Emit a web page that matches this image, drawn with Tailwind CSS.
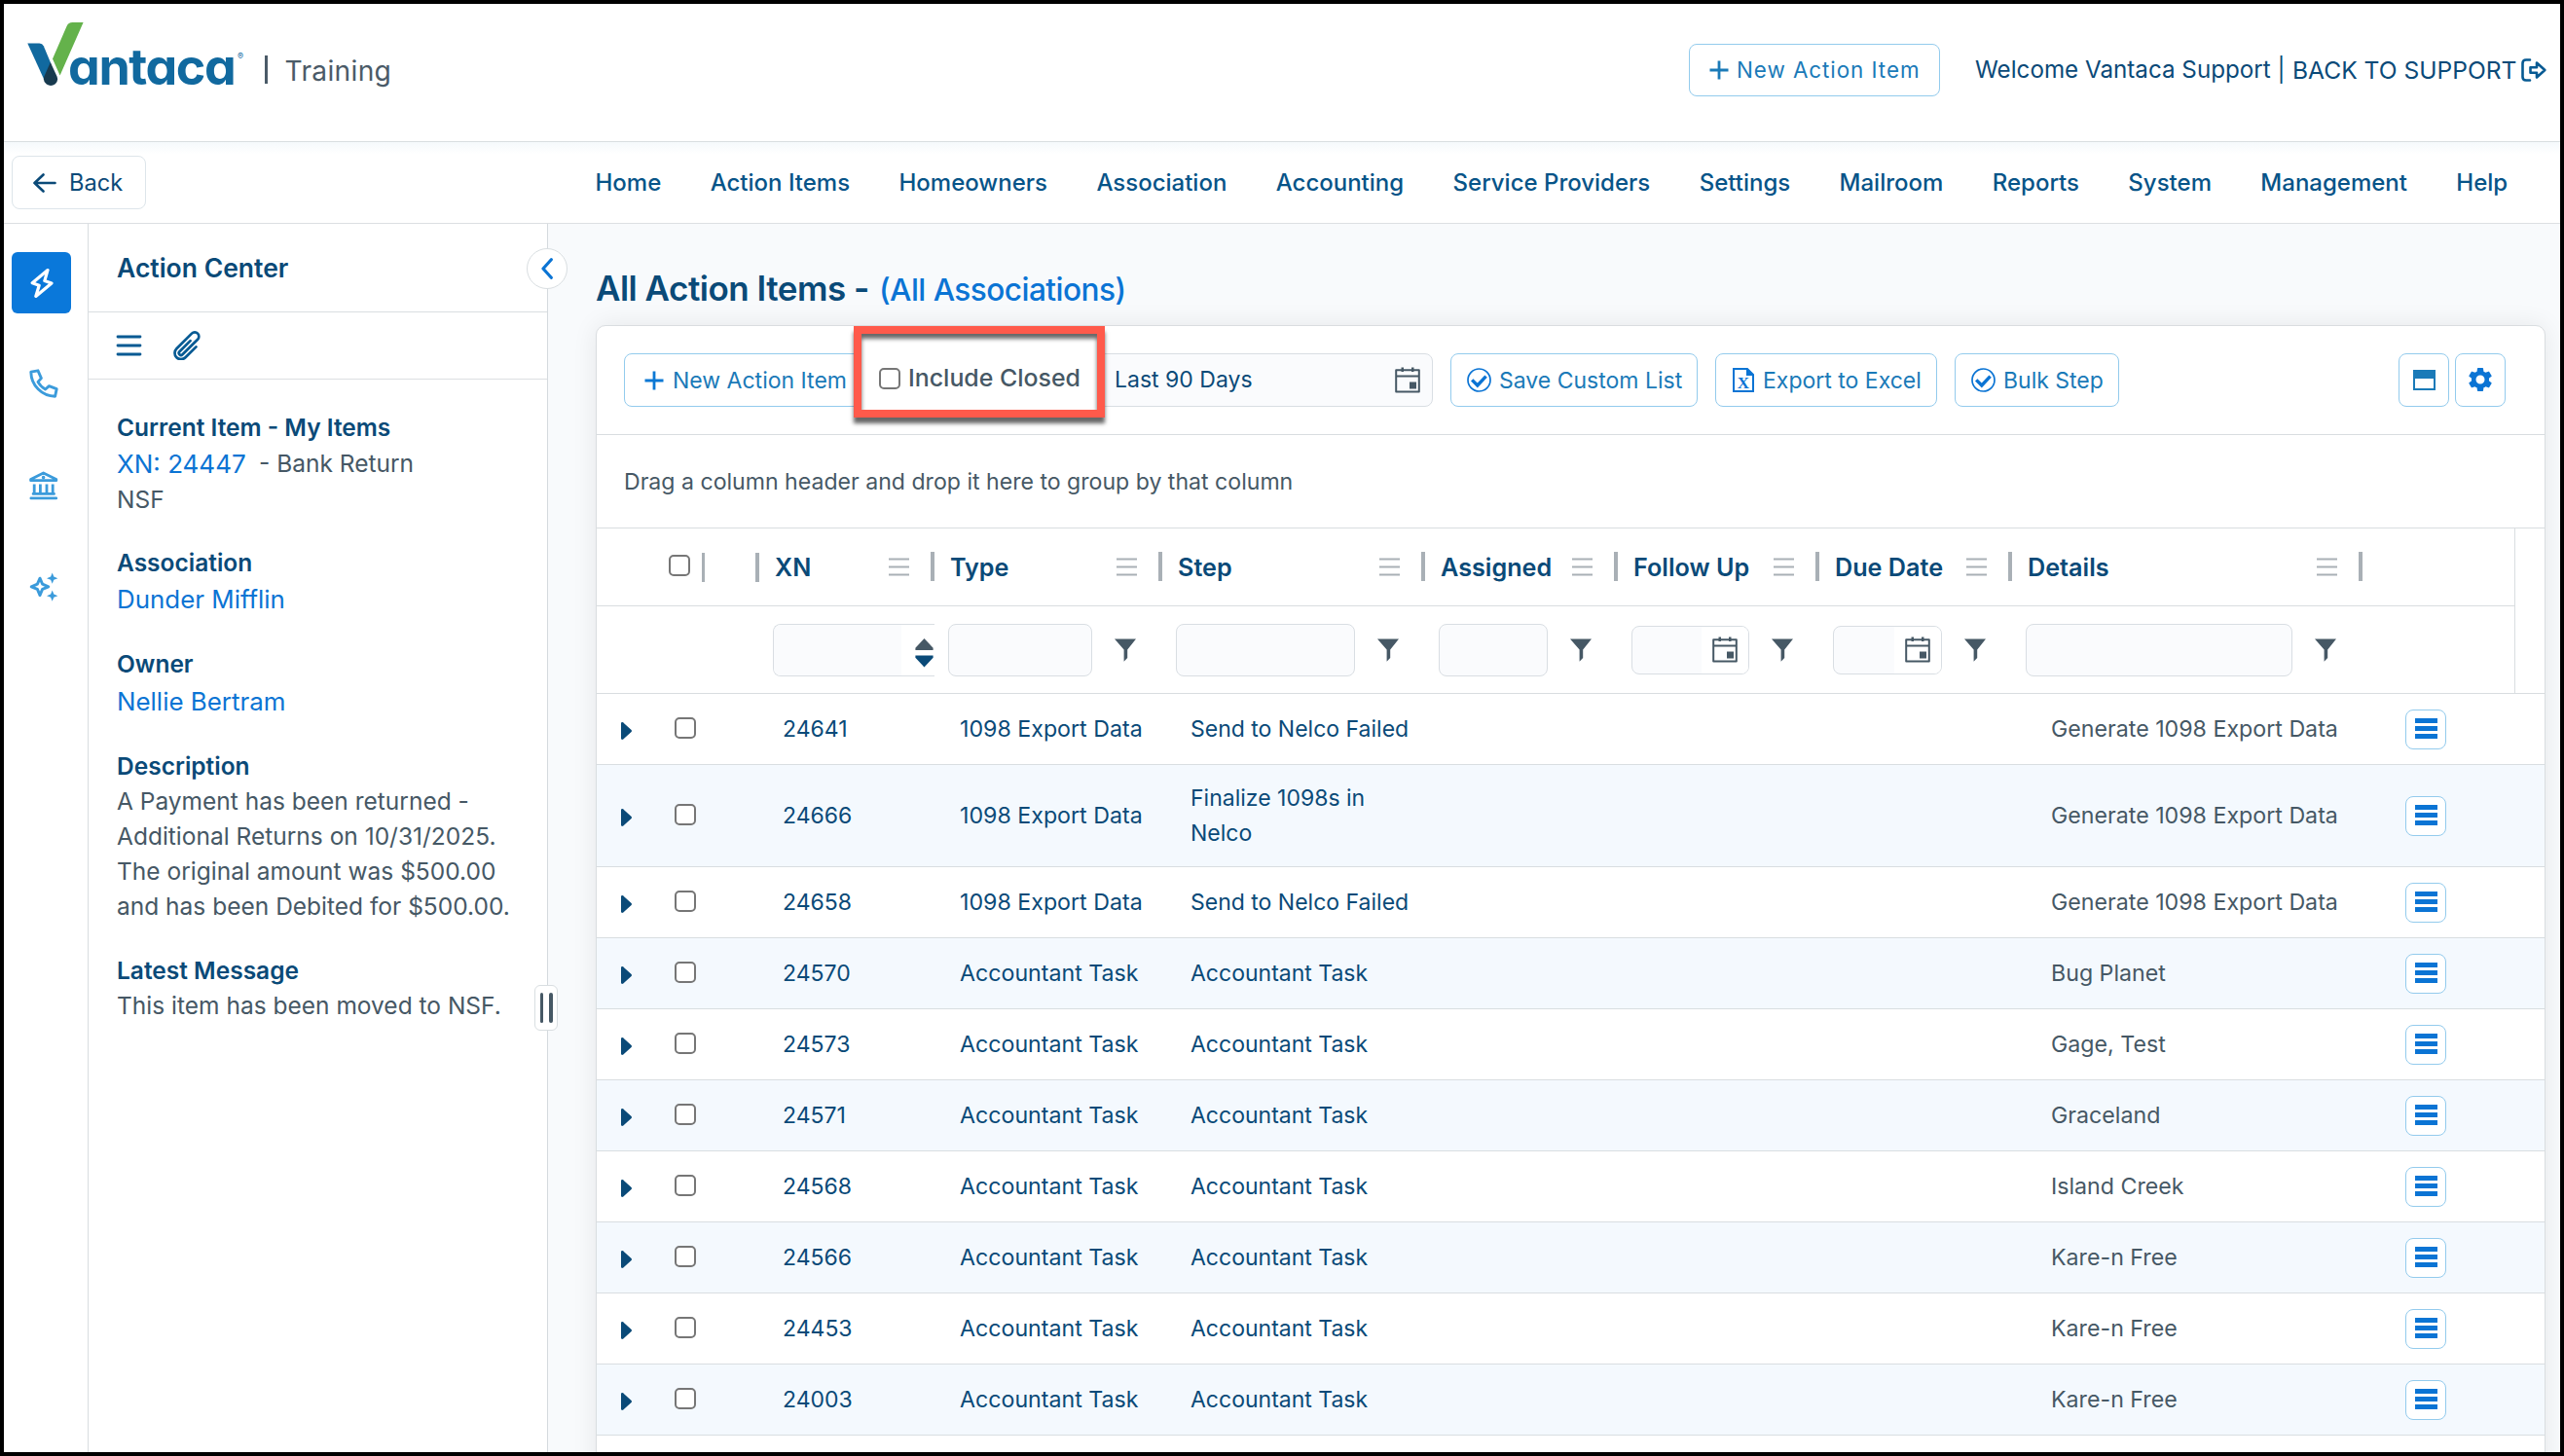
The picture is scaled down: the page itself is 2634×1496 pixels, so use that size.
<!DOCTYPE html>
<html lang="en">
<head>
  <meta charset="UTF-8">
  <meta name="viewport" content="width=device-width, initial-scale=1.0">
  <title>Vantaca - All Action Items</title>
  <script src="https://cdn.jsdelivr.net/npm/@tailwindcss/browser@4"></script>
</head>
<body class="h-screen overflow-hidden border-4 border-black bg-white font-['Inter',sans-serif] text-[23px] text-[#465865] flex flex-col">

  <!-- icon sprite -->
  <svg class="hidden" xmlns="http://www.w3.org/2000/svg">
    <symbol id="i-plus" viewBox="0 0 20 20"><path d="M10 0.5V19.5M0.5 10H19.5" stroke="currentColor" stroke-width="2.8" fill="none"/></symbol>
    <symbol id="i-lines" viewBox="0 0 21 21"><path d="M0 2.5H21M0 10.5H21M0 18.5H21" stroke="currentColor" stroke-width="2.2" fill="none"/></symbol>
    <symbol id="i-funnel" viewBox="0 0 22 24"><path d="M0 0.5H22L13.2 11.5V20L9.6 23.8V11.5Z" fill="currentColor"/></symbol>
    <symbol id="i-cal" viewBox="0 0 26 27"><path d="M1.2 3.2H24.8V25.6H1.2ZM1.2 9.5H24.8" stroke="currentColor" stroke-width="2" fill="none" stroke-linejoin="round"/><path d="M6.5 0.5H9V5H6.5ZM17 0.5H19.5V5H17ZM15 15.5H22V22.5H15Z" fill="currentColor"/></symbol>
    <symbol id="i-check" viewBox="0 0 25 25"><circle cx="12.5" cy="12.5" r="11.5" fill="none" stroke="currentColor" stroke-width="1.7"/><path d="M5.2 12.4L10.8 18L19.6 8.6" fill="none" stroke="currentColor" stroke-width="3.4"/></symbol>
    <symbol id="i-caret" viewBox="0 0 11 18"><path d="M1.2 0C2 0 2.6 0.5 3.1 1.2L10.6 8C11.1 8.6 11.1 9.4 10.6 10L3.1 16.8C2.6 17.5 2 18 1.2 18C0.4 18 0 17.4 0 16.6V1.4C0 0.6 0.4 0 1.2 0Z" fill="currentColor"/></symbol>
    <symbol id="i-bars" viewBox="0 0 23 21"><path d="M0 2.5H23M0 10.5H23M0 18.5H23" stroke="currentColor" stroke-width="5" fill="none"/></symbol>
  </svg>

  <header class="h-[142px] shrink-0 border-b border-[#d9dee0] flex items-start justify-between pl-6 pr-[14px]">
    <div class="flex items-start">
      <svg class="mt-[19px] w-[60px] h-[66px] shrink-0" viewBox="0 0 60 66">
        <path d="M0.3 21.5H12.5Q15.5 21.5 16.8 24.3L23.8 41L27 52L17.3 58.8Z" fill="#11699f"/>
        <path d="M57.6 0L33.6 54.5L26 37.5L40.4 4.2Q42.2 0 46.5 0Z" fill="#64b24b"/>
        <path d="M23.8 41L30.4 55.2Q32.4 60 28.8 63.2Q24.5 66.6 19.8 63.6Q15.6 60.2 17.4 55.6Z" fill="#183a4f"/>
      </svg>
      <div class="mt-[38px] -ml-[18px] w-[172px] h-[54px] leading-[54px] text-[52px] font-bold tracking-[-1.4px] text-[#11699f]" style="font-feature-settings:'cv11'">antaca</div>
      <div class="mt-[47px] ml-[2px] w-7 text-[9px] text-[#11699f]">®</div>
      <div class="mt-[53px] w-[2.5px] h-[29px] bg-[#4b5b68]"></div>
      <div class="mt-[42px] ml-[18px] h-[54px] leading-[54px] text-[28.2px] tracking-[0.3px] text-[#4b5b68]">Training</div>
    </div>
    <div class="mt-[41px] h-[54px] flex items-center text-[24.2px] text-[#0b4a78] whitespace-nowrap">
      <button class="w-[258px] h-[54px] mr-[36px] border-[1.5px] border-[#93cbed] rounded-lg flex items-center pl-5 text-[#1a7ab8] text-[22.4px] tracking-[0.95px]">
        <svg class="w-5 h-5 mr-2"><use href="#i-plus"/></svg>New Action Item
      </button>
      <span class="w-[326px] pt-px">Welcome Vantaca Support |</span>
      <a class="w-[235px] text-[24.6px]">BACK TO SUPPORT</a>
      <svg class="w-[26px] h-6 text-[#075a93]" viewBox="0 0 26 24" fill="none" stroke="currentColor" stroke-width="2.6" stroke-linejoin="round" stroke-linecap="round">
        <path d="M9 1.5H5Q1.5 1.5 1.5 5V19Q1.5 22.5 5 22.5H9"/>
        <path d="M9.5 9.2H16V4.5L24.3 12L16 19.5V14.8H9.5Z"/>
      </svg>
    </div>
  </header>

  <nav class="h-[84px] shrink-0 border-b border-[#dcdfe2] bg-linear-to-b from-[#f5f9fc] to-white to-15% flex items-center text-[24px] font-medium text-[#075488] whitespace-nowrap">
    <button class="w-[138px] h-[55px] ml-2 border border-[#dde5ea] rounded-lg bg-white flex items-center pl-[21px] text-[23.6px] font-normal text-[#0b4a78]">
      <svg class="w-6 h-5 mr-[13px]" viewBox="0 0 24 20" fill="none" stroke="currentColor" stroke-width="2.6" stroke-linecap="round" stroke-linejoin="round"><path d="M22.5 10H1.5M10.5 1.5L1.5 10L10.5 18.5"/></svg>Back
    </button>
    <div class="ml-[461.5px] flex gap-[50.4px]">
      <a>Home</a><a>Action Items</a><a>Homeowners</a><a>Association</a><a>Accounting</a><a>Service Providers</a><a>Settings</a><a>Mailroom</a><a>Reports</a><a>System</a><a>Management</a><a>Help</a>
    </div>
  </nav>

  <div class="flex-1 min-h-0 flex">
    <!-- icon rail -->
    <aside class="w-[87px] shrink-0 border-r border-[#d9dde0] text-[#3b9bdb] flex flex-col">
      <div class="ml-2 mt-[29px] w-[61px] h-[63px] rounded-md bg-[#0a78da] flex items-center justify-center">
        <svg class="w-6 h-8" viewBox="0 0 24 32" fill="none" stroke="white" stroke-width="3.2" stroke-linejoin="round"><path d="M18 2.6L2.2 15.8L9.2 18.2L5.8 29.4L22 16L14.8 13.6Z"/></svg>
      </div>
      <svg class="ml-[26px] mt-[57px] w-[30px] h-[30px]" viewBox="0 0 30 30" fill="none" stroke="currentColor" stroke-width="2.9" stroke-linejoin="round"><path d="M1.8 3.2L9 1.8L12.4 9.6L9 13.4C10.8 16.8 13.2 19 16.6 21L20.4 17.6L28.2 20.6L26.6 28.2C13 28 2 17 1.8 3.2Z"/></svg>
      <svg class="ml-[26px] mt-[75px] w-[30px] h-[30px]" viewBox="0 0 30 30" fill="none" stroke="currentColor" stroke-width="2.8" stroke-linejoin="round" stroke-linecap="round"><path d="M1.6 9.7V8.4L14.6 2L27.8 8.4V9.7Z"/><path d="M1.8 27.9H27.8M4 23.4H25.6" stroke-width="2.6"/><path d="M5.2 13.5V22M11.4 13.5V22M18 13.5V22M24.2 13.5V22" stroke-linecap="butt"/><circle cx="14.6" cy="6.6" r="1" stroke-width="1.6"/></svg>
      <svg class="ml-[26px] mt-[74px] w-[30px] h-[30px]" viewBox="0 0 30 30" fill="currentColor"><path d="M11 6.2L13.6 12.2L19.8 14.8L13.6 17.4L11 23.6L8.4 17.4L2.2 14.8L8.4 12.2Z" fill="none" stroke="currentColor" stroke-width="2.9" stroke-linejoin="round"/><path d="M23.7 0.6L25.3 4.6L29.4 6.2L25.3 7.8L23.7 11.8L22.1 7.8L18 6.2L22.1 4.6ZM23.7 18.6L25.3 22.6L29.4 24.2L25.3 25.8L23.7 29.8L22.1 25.8L18 24.2L22.1 22.6Z"/></svg>
    </aside>

    <!-- action center -->
    <section class="relative w-[472px] shrink-0 border-r border-[#d5dade] text-[24.5px]">
      <div class="h-[91px] border-b border-[#d9dee1] flex items-center pl-[29px] pt-[2px] text-[26.5px] font-semibold text-[#0a4a78]">Action Center</div>
      <div class="h-[69px] border-b border-[#dcdfe2] flex items-center pl-7 gap-8 text-[#075a93]">
        <svg class="w-[27px] h-[22px]" viewBox="0 0 27 22" fill="none" stroke="currentColor" stroke-width="2.8" stroke-linecap="round"><path d="M2 2H25M2 11H25M2 20H25"/></svg>
        <svg class="w-[28px] h-[30px]" viewBox="2 1.3 19.5 21" fill="none" stroke="currentColor" stroke-width="1.9" stroke-linecap="round" stroke-linejoin="round"><path d="m18.375 12.739-7.693 7.693a4.5 4.5 0 0 1-6.364-6.364l10.94-10.94A3 3 0 1 1 19.5 7.372L8.552 18.32m.009-.01-.01.01m5.699-9.941-7.81 7.81a1.5 1.5 0 0 0 2.112 2.13"/></svg>
      </div>
      <div class="px-[29px] pt-[30.5px] flex flex-col gap-[29px]">
        <div class="leading-[37.3px]">
          <h3 class="font-semibold text-[#0a4a78]">Current Item - My Items</h3>
          <div class="flex h-[37px]"><a class="w-[146px] text-[26px] text-[#0b74d4]">XN: 24447</a><span>- Bank Return</span></div>
          <p>NSF</p>
        </div>
        <div class="leading-[37.3px] -mt-[1px]">
          <h3 class="font-semibold text-[#0a4a78]">Association</h3>
          <a class="block h-[37px] text-[25.9px] text-[#0b74d4]">Dunder Mifflin</a>
        </div>
        <div class="leading-[37.3px] mt-px">
          <h3 class="font-semibold text-[#0a4a78]">Owner</h3>
          <a class="block h-[37px] text-[25.9px] text-[#0b74d4]">Nellie Bertram</a>
        </div>
        <div class="leading-[36.1px] mt-px">
          <h3 class="font-semibold text-[#0a4a78]">Description</h3>
          <p class="whitespace-nowrap">A Payment has been returned -<br>Additional Returns on 10/31/2025.<br>The original amount was $500.00<br>and has been Debited for $500.00.</p>
        </div>
        <div class="leading-[36.3px] mt-px">
          <h3 class="font-semibold text-[#0a4a78]">Latest Message</h3>
          <p class="whitespace-nowrap">This item has been moved to NSF.</p>
        </div>
      </div>
      <!-- collapse button + resize handle sit on the panel edge -->
      <button class="absolute z-10 left-[450px] top-[25px] w-[42px] h-[42px] rounded-full border border-[#d9dee1] bg-white flex items-center justify-center">
        <svg class="w-3 h-[22px] text-[#0b74d4]" viewBox="0 0 12 22" fill="none" stroke="currentColor" stroke-width="3.2" stroke-linecap="round" stroke-linejoin="round"><path d="M10.3 1.8L2 11L10.3 20.2"/></svg>
      </button>
      <div class="absolute z-10 left-[458px] top-[782px] w-6 h-[47px] rounded-md border border-[#d9dee1] bg-white flex items-center justify-center gap-[6px]">
        <span class="w-[3.5px] h-[31px] rounded bg-[#465865]"></span><span class="w-[3.5px] h-[31px] rounded bg-[#465865]"></span>
      </div>
    </section>

    <main class="flex-1 min-w-0 bg-[#f8fafc] pl-[49px] overflow-hidden">
      <h1 class="h-[104px] pt-[45px] leading-[43px] text-[35px] tracking-[-0.5px] font-semibold text-[#0a4a78] flex whitespace-nowrap">
        <span class="w-[291px]">All Action Items -</span><span class="text-[31.6px] tracking-[-0.55px] font-medium leading-[46px] text-[#0b74d4]">(All Associations)</span>
      </h1>
      <div class="w-[2003px] h-[1200px] bg-white border border-[#d9dde0] rounded-t-[10px] shadow-[0_0_26px_rgba(0,0,0,0.08)]">

        <div class="relative h-[112px] border-b border-[#d9dde0] flex items-start pt-7 pl-7 text-[#1a7ab8] whitespace-nowrap">
          <button class="w-[260px] h-[55px] border border-[#93cbed] rounded-lg flex items-center pl-5"><svg class="w-5 h-5 mr-[9px] text-[#0b78d4]"><use href="#i-plus"/></svg><span class="pt-[2px]">New Action Item</span></button>
          <div class="ml-[214px] w-[357px] h-[55px] border border-[#d9dee3] rounded-lg bg-[#fafbfd] flex items-center justify-between pl-[29px] pr-3 text-[#0a4a78]">Last 90 Days<svg class="w-[26px] h-[27px] text-[#465865]"><use href="#i-cal"/></svg></div>
          <button class="ml-[18px] w-[254px] h-[55px] border border-[#93cbed] rounded-lg flex items-center pl-4"><svg class="w-[25px] h-[25px] mr-2 text-[#0b74d4]"><use href="#i-check"/></svg><span class="pt-[2px]">Save Custom List</span></button>
          <button class="ml-[18px] w-[228px] h-[55px] border border-[#93cbed] rounded-lg flex items-center pl-[17px]">
            <svg class="w-[22px] h-[25px] mr-[9px] text-[#0b74d4]" viewBox="0 0 22 25"><path d="M1 1H15L21 7V24H1Z" fill="none" stroke="currentColor" stroke-width="2"/><path d="M14 0L22 8H14Z" fill="currentColor"/><text x="11" y="21" text-anchor="middle" font-size="17" font-weight="700" font-family="Liberation Serif" fill="currentColor">X</text></svg><span class="pt-[2px]">Export to Excel</span>
          </button>
          <button class="ml-[18px] w-[169px] h-[55px] border border-[#93cbed] rounded-lg flex items-center pl-4"><svg class="w-[25px] h-[25px] mr-2 text-[#0b74d4]"><use href="#i-check"/></svg><span class="pt-[2px]">Bulk Step</span></button>
          <button class="ml-auto w-[52px] h-[55px] border border-[#93cbed] rounded-lg flex items-center justify-center"><svg class="w-[23px] h-[21px]" viewBox="0 0 23 21"><path d="M0 0H23V21H0ZM2 9V19H21V9Z" fill="currentColor" fill-rule="evenodd"/></svg></button>
          <button class="ml-[6px] mr-10 w-[52px] h-[55px] border border-[#93cbed] rounded-lg flex items-center justify-center text-[#0b74d4]">
            <svg class="w-[30px] h-[30px] mb-[2px]" viewBox="0 0 24 24"><path fill="currentColor" d="M19.14 12.94c.04-.3.06-.61.06-.94s-.02-.64-.07-.94l2.03-1.58a.49.49 0 0 0 .12-.61l-1.92-3.32a.49.49 0 0 0-.59-.22l-2.39.96a7 7 0 0 0-1.62-.94l-.36-2.54a.48.48 0 0 0-.48-.41h-3.84a.48.48 0 0 0-.47.41l-.36 2.54c-.59.24-1.13.57-1.62.94l-2.39-.96a.48.48 0 0 0-.59.22L2.74 8.87a.48.48 0 0 0 .12.61l2.03 1.58c-.05.3-.09.63-.09.94s.02.64.07.94l-2.03 1.58a.49.49 0 0 0-.12.61l1.92 3.32c.12.22.37.29.59.22l2.39-.96c.5.38 1.03.7 1.62.94l.36 2.54c.05.24.24.41.48.41h3.84c.24 0 .44-.17.47-.41l.36-2.54a6.8 6.8 0 0 0 1.62-.94l2.39.96c.22.08.47 0 .59-.22l1.92-3.32a.48.48 0 0 0-.12-.61zM12 15.6a3.6 3.6 0 1 1 0-7.2 3.6 3.6 0 0 1 0 7.2"/></svg>
          </button>
          <!-- callout -->
          <div class="absolute left-[264px] top-0 w-[258px] h-[94px] border-8 border-[#ff5a4b] bg-white shadow-[0_6px_4px_rgba(0,0,0,0.6),inset_0_5px_4px_rgba(0,0,0,0.6)] flex items-center pl-[18px] pt-[13px] text-[24.9px] font-medium text-[#465865]">
            <input type="checkbox" class="appearance-none w-[22px] h-[22px] border-2 border-[#767676] rounded-[5px] bg-white mr-[8px]">Include Closed
          </div>
        </div>

        <div class="h-24 border-b border-[#d9dde0] flex items-center pl-7 pt-[2px] text-[23.1px]">Drag a column header and drop it here to group by that column</div>

        <div class="w-[1971px] border-r border-[#d9dde0]">
          <div id="headRow" class="h-20 border-b border-[#d9dde0] grid grid-cols-[167px_180px_234px_270px_198px_207px_198px_360px_156px] items-center">
            <div class="h-[30px] flex items-center justify-end gap-3">
              <input type="checkbox" class="appearance-none w-[22px] h-[22px] mb-[3px] border-2 border-[#767676] rounded-[5px] bg-white"><span class="w-[3.5px] h-[30px] bg-[#a9b0b6]"></span><span class="ml-[40px] w-[4px] h-[30px] bg-[#a9b0b6]"></span>
            </div>
          </div>
          <div id="filterRow" class="h-[89px] grid grid-cols-[167px_180px_234px_270px_198px_207px_198px_360px_156px] items-center">
            <div></div>
          </div>
        </div>
        <div id="rows" class="border-t border-[#d9dde0]"></div>
      </div>
    </main>
  </div>

  <script>
    const columns = [
      ['XN', 'number'], ['Type', 'text'], ['Step', 'text'], ['Assigned', 'text'],
      ['Follow Up', 'date'], ['Due Date', 'date'], ['Details', 'text']
    ];
    const items = [
      ['24641', '1098 Export Data', 'Send to Nelco Failed', 'Generate 1098 Export Data'],
      ['24666', '1098 Export Data', 'Finalize 1098s in Nelco', 'Generate 1098 Export Data'],
      ['24658', '1098 Export Data', 'Send to Nelco Failed', 'Generate 1098 Export Data'],
      ['24570', 'Accountant Task', 'Accountant Task', 'Bug Planet'],
      ['24573', 'Accountant Task', 'Accountant Task', 'Gage, Test'],
      ['24571', 'Accountant Task', 'Accountant Task', 'Graceland'],
      ['24568', 'Accountant Task', 'Accountant Task', 'Island Creek'],
      ['24566', 'Accountant Task', 'Accountant Task', 'Kare-n Free'],
      ['24453', 'Accountant Task', 'Accountant Task', 'Kare-n Free'],
      ['24003', 'Accountant Task', 'Accountant Task', 'Kare-n Free']
    ];

    const funnel = '<svg class="w-[22px] h-6 ml-auto mr-[27px] text-[#465865]"><use href="#i-funnel"/></svg>';
    const filters = {
      number: `<div class="flex pl-[14px]"><div class="flex-1 h-[54px] border border-r-0 border-[#d9dee3] rounded-l-lg overflow-hidden flex justify-between bg-white">
          <span class="w-[131px] bg-[#fafbfd]"></span>
          <svg class="w-[19px] h-[30px] mt-[14px] mr-[1px]" viewBox="0 0 19 30"><path d="M9.5 0L18.6 9.8V12H0.4V9.8Z" fill="#465865"/><path d="M9.5 29.5L18.6 19.7V17.5H0.4V19.7Z" fill="#0a4a78"/></svg>
        </div></div>`,
      text: `<div class="flex items-center pl-[14px]"><div class="flex-1 h-[54px] mr-[23px] border border-[#d9dee3] rounded-lg bg-[#fafbfd]"></div>${funnel}</div>`,
      date: `<div class="flex items-center pl-[14px]"><div class="flex-1 h-[50px] mr-[23px] border border-[#d9dee3] rounded-lg bg-[#fafbfd] overflow-hidden flex justify-end"><span class="w-[48px] h-full bg-white flex items-center justify-center"><svg class="w-[26px] h-[27px] text-[#465865]"><use href="#i-cal"/></svg></span></div>${funnel}</div>`
    };

    document.getElementById('headRow').insertAdjacentHTML('beforeend', columns.map(([name]) => `
      <div class="flex items-center pl-4 text-[25.2px] font-semibold text-[#0a4a78] whitespace-nowrap"><span class="pt-[2px]">${name}</span>
        <svg class="w-[21px] h-[21px] ml-auto mr-[22px] text-[#a9b0b6]"><use href="#i-lines"/></svg><span class="w-[4px] h-[30px] bg-[#a9b0b6]"></span>
      </div>`).join(''));
    document.getElementById('filterRow').insertAdjacentHTML('beforeend', columns.map(([, type]) => filters[type]).join(''));

    document.getElementById('rows').innerHTML = items.map(([xn, type, step, details]) => `
      <div class="border-b border-[#d9dee1] even:bg-[#f4f9fe] min-h-[73px] py-[15.5px] grid grid-cols-[80px_111px_182px_237px_884px_363px_1fr] items-center leading-[36.5px] text-[#0a4a78]">
        <svg class="w-[11px] h-[18px] ml-[25px] mt-[3px]"><use href="#i-caret"/></svg>
        <input type="checkbox" class="appearance-none w-[22px] h-[22px] border-2 border-[#767676] rounded-[5px] bg-white mb-[3px]">
        <span>${xn}</span><span class="text-[23.2px]">${type}</span><span class="w-[230px]">${step}</span>
        <span class="text-[23.2px] text-[#465865]">${details}</span>
        <button class="ml-[1px] -my-2 w-[42px] h-[41px] border border-[#93cbed] rounded-lg bg-white flex items-center justify-center text-[#0b74d4]"><svg class="w-[23px] h-[21px] mb-[2px]"><use href="#i-bars"/></svg></button>
      </div>`).join('');
  </script>
</body>
</html>
